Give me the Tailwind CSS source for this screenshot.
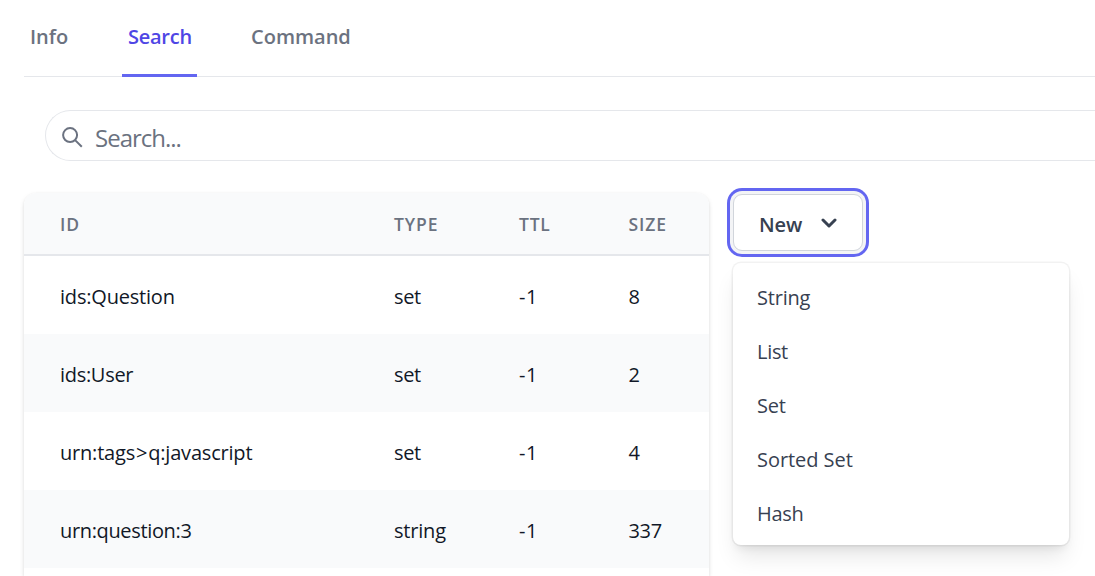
<!DOCTYPE html>
<html lang="en">
<head>
<meta charset="utf-8">
<title>Search</title>
<script src="https://cdn.jsdelivr.net/npm/@tailwindcss/browser@4"></script>
</head>
<body class="h-[576px] overflow-hidden bg-white pl-6 font-['Open_Sans','Noto_Sans',sans-serif] text-[20px] text-[#111827]">
<nav class="flex h-[77px] gap-12 border-b border-[#e5e7eb] font-[560] text-[#6b7280]">
  <a class="w-[50px] px-1.5 pt-[22px] leading-[30px]">Info</a>
  <a class="h-[77px] w-[75px] border-b-3 border-[#6366f1] pt-[22px] pl-1.5 leading-[30px] tracking-[-0.25px] text-[#4f46e5]">Search</a>
  <a class="px-1.5 pt-[22px] leading-[30px]">Command</a>
</nav>
<div class="mt-[33px] ml-[21px] flex h-[51px] items-center overflow-hidden rounded-l-full border border-r-0 border-[#e5e7eb] pl-4 text-[#6b7280]">
  <svg class="mt-[3px] h-[21px] w-[21px] shrink-0" viewBox="0 0 21 21" fill="none" stroke="currentColor" stroke-width="2"><circle cx="8.1" cy="8.1" r="7"/><path d="M13.1 13.1L19.8 19.8"/></svg>
  <span class="ml-3 pt-1 text-[24px] tracking-[-1px]">Search...</span>
</div>
<main class="mt-8 flex h-[383px] items-start gap-6">
  <table class="w-[685px] shrink-0 table-fixed border-separate border-spacing-0 rounded-t-xl text-left shadow-[0_2px_5px_rgba(0,0,0,0.1),0_1px_3px_rgba(0,0,0,0.06)]">
    <colgroup><col class="w-[334px]"><col class="w-[125px]"><col class="w-[109.5px]"><col></colgroup>
    <thead>
      <tr class="h-[63px] text-[17.5px] text-[#6b7280]">
        <th class="rounded-tl-xl border-b-2 border-[#e5e7eb] bg-[#f9fafb] pt-0.5 pl-9 font-semibold tracking-[0.8px]">ID</th>
        <th class="border-b-2 border-[#e5e7eb] bg-[#f9fafb] pt-0.5 pl-9 font-semibold tracking-[0.9px]">TYPE</th>
        <th class="border-b-2 border-[#e5e7eb] bg-[#f9fafb] pt-0.5 pl-9 font-semibold tracking-[0.8px]">TTL</th>
        <th class="rounded-tr-xl border-b-2 border-[#e5e7eb] bg-[#f9fafb] pt-0.5 pl-9 font-semibold tracking-[0.9px]">SIZE</th>
      </tr>
    </thead>
    <tbody class="tracking-[-0.35px]">
      <tr class="h-[78px] bg-white"><td class="pt-1 pl-9 tracking-[-0.2px]">ids:Question</td><td class="pt-1 pl-9">set</td><td class="pt-1 pl-9 tracking-[0.5px]">-1</td><td class="pt-1 pl-9">8</td></tr>
      <tr class="h-[78px] bg-[#f9fafb]"><td class="pt-1 pl-9 tracking-[-0.3px]">ids:User</td><td class="pt-1 pl-9">set</td><td class="pt-1 pl-9 tracking-[0.5px]">-1</td><td class="pt-1 pl-9">2</td></tr>
      <tr class="h-[78px] bg-white"><td class="pt-1 pl-9 tracking-[-0.2px]">urn:tags<span class="px-px">&gt;</span>q:javascript</td><td class="pt-1 pl-9">set</td><td class="pt-1 pl-9 tracking-[0.5px]">-1</td><td class="pt-1 pl-9">4</td></tr>
      <tr class="h-[78px] bg-[#f9fafb]"><td class="pt-1 pl-9">urn:question:3</td><td class="pt-1 pl-9 tracking-[-0.2px]">string</td><td class="pt-1 pl-9 tracking-[0.5px]">-1</td><td class="pt-1 pl-9">337</td></tr>
      <tr class="h-2 bg-white"><td></td><td></td><td></td><td></td></tr>
    </tbody>
  </table>
  <div class="pt-px">
    <button class="flex h-[57px] w-[130px] items-center rounded-[9px] border border-[#d1d5db] bg-white pl-[25px] font-[560] text-[#374151] shadow-[0_0_0_3px_#f3f4f6,0_0_0_6px_#6366f1]">
      <span class="w-[62px] pt-[4px] text-left tracking-[-0.1px]">New</span>
      <svg class="h-[10px] w-4" viewBox="0 0 16 10" fill="none" stroke="currentColor" stroke-width="3" stroke-linecap="round" stroke-linejoin="round"><path d="M2 2L8 8L14 2"/></svg>
    </button>
    <div class="mt-3 h-[282px] w-[336px] rounded-[8px] bg-white py-1.5 text-[#374151] shadow-[0_0_0_1.5px_rgba(0,0,0,0.05),0_15px_22px_-4px_rgba(0,0,0,0.1),0_6px_9px_-3px_rgba(0,0,0,0.07)]">
      <a class="flex h-[54px] items-center pt-1 pl-6 tracking-[-0.2px]">String</a>
      <a class="flex h-[54px] items-center pt-1 pl-6 tracking-[-0.3px]">List</a>
      <a class="flex h-[54px] items-center pt-1 pl-6 tracking-[-0.2px]">Set</a>
      <a class="flex h-[54px] items-center pt-1 pl-6 tracking-[-0.05px]">Sorted Set</a>
      <a class="flex h-[54px] items-center pt-1 pl-6 tracking-[-0.3px]">Hash</a>
    </div>
  </div>
</main>
</body>
</html>
